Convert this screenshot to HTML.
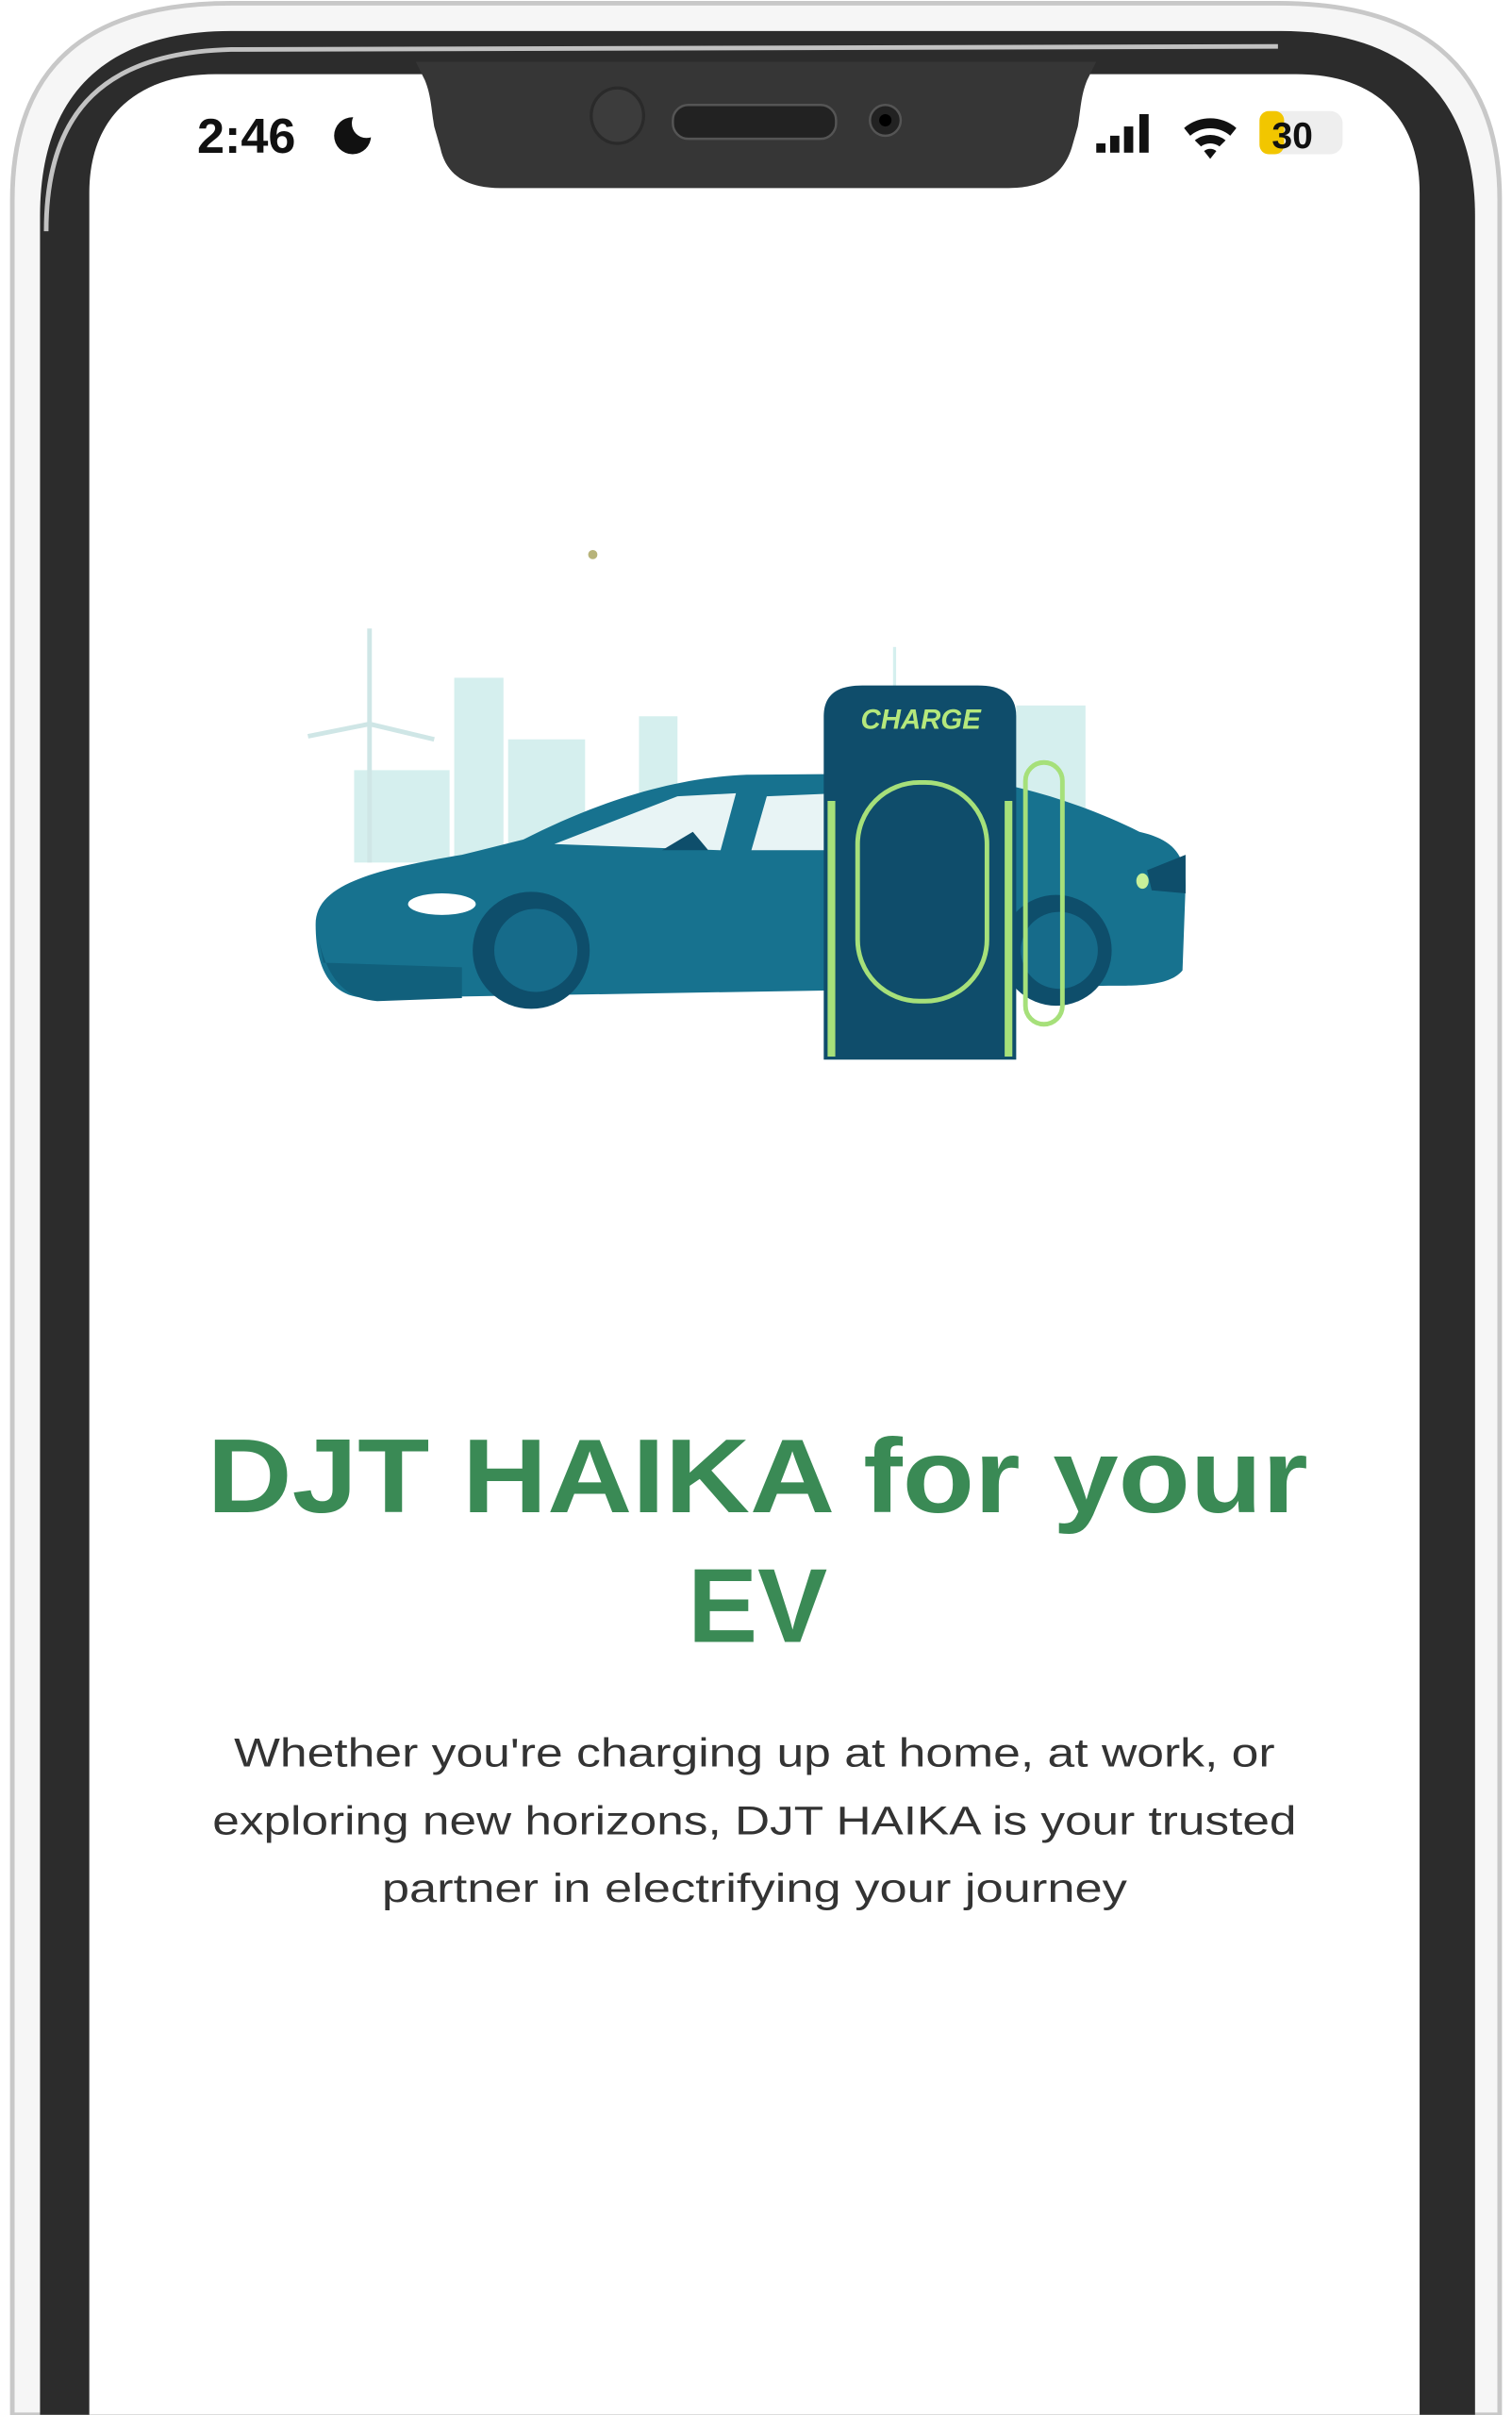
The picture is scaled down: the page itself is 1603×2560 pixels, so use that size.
<!DOCTYPE html>
<html><head><meta charset="utf-8"><style>html,body{margin:0;padding:0;background:#fff}svg{display:block}</style></head>
<body>
<svg width="1603" height="2560" viewBox="0 0 982 1568" xmlns="http://www.w3.org/2000/svg">
<rect width="982" height="1568" fill="#fff"/>
<path d="M8,1568 L8,130 C8,40 60,2 150,2 L830,2 C920,2 974,40 974,130 L974,1568 Z" fill="#f6f6f6" stroke="#c8c8c8" stroke-width="3"/>
<path d="M26,1568 L26,140 C26,60 70,20 150,20 L832,20 C910,20 958,60 958,140 L958,1568 Z" fill="#2c2c2c"/>
<path d="M30,150 C30,70 70,34 150,32 L830,30" fill="none" stroke="#e8e8e8" stroke-width="3" opacity="0.8"/>
<path d="M58,1568 L58,125 C58,75 90,48 140,48 L842,48 C892,48 922,75 922,125 L922,1568 Z" fill="#fff"/>
<path d="M270,40 L712,40 L706,52 C702,62 702,70 700,82 L696,96 C690,115 675,122 655,122 L325,122 C305,122 290,115 286,96 L282,82 C280,70 280,62 276,52 Z" fill="#363636"/>
<ellipse cx="401" cy="75" rx="17" ry="18" fill="#3c3c3c" stroke="#2a2a2a" stroke-width="2"/>
<rect x="437" y="68" width="106" height="22" rx="10" fill="#222" stroke="#555" stroke-width="1.5"/>
<circle cx="575" cy="78" r="10" fill="#222" stroke="#555" stroke-width="1.5"/>
<circle cx="575" cy="78" r="4" fill="#000"/>
<text x="128" y="99" font-family="Liberation Sans, sans-serif" font-size="32" font-weight="bold" fill="#111">2:46</text>
<circle cx="229" cy="88" r="12" fill="#111"/>
<circle cx="238" cy="80" r="9.5" fill="#fff"/>
<rect x="712" y="93" width="6" height="6" fill="#111"/>
<rect x="721" y="88" width="6" height="11" fill="#111"/>
<rect x="730" y="82" width="6" height="17" fill="#111"/>
<rect x="740" y="74" width="6" height="25" fill="#111"/>
<path d="M769,83 A26,26 0 0 1 803,83 L799,88 A20,20 0 0 0 773,88 Z M776,91 A16,16 0 0 1 796,91 L792,95 A10,10 0 0 0 780,95 Z M782,98 A6,6 0 0 1 790,98 L786,103 Z" fill="#111"/>
<rect x="818" y="72" width="54" height="28" rx="8" fill="#eee"/>
<rect x="818" y="72" width="16" height="28" rx="6" fill="#f2c600"/>
<text x="826" y="96" font-family="Liberation Sans, sans-serif" font-size="24" font-weight="bold" fill="#111">30</text>
<circle cx="385" cy="360" r="3" fill="#b7b37a"/>
<g fill="#d5efee">
<rect x="295" y="440" width="32" height="120"/>
<rect x="330" y="480" width="50" height="80"/>
<rect x="415" y="465" width="25" height="95"/>
<rect x="230" y="500" width="62" height="60"/>
<rect x="660" y="458" width="45" height="70"/>
<rect x="580" y="420" width="2" height="30"/>
</g>
<g stroke="#cfe6e6" stroke-width="3" fill="none">
<line x1="240" y1="408" x2="240" y2="560"/>
<line x1="240" y1="470" x2="200" y2="478"/>
<line x1="240" y1="470" x2="282" y2="480"/>
</g>
<path d="M205,600 C205,575 240,565 300,555 L340,545 C385,522 435,505 485,503 L600,502 C650,505 700,520 740,540 C762,545 770,555 770,575 L768,630 C760,640 740,640 720,640 L240,648 C215,648 205,630 205,600 Z" fill="#17728f"/>
<path d="M205,600 C210,630 220,648 245,650 L300,648 L300,628 L210,625 Z" fill="#11607c"/>
<path d="M360,548 L440,517 L478,515 L468,552 Z" fill="#e8f4f5"/>
<path d="M488,552 L498,517 L545,515 L545,552 Z" fill="#e8f4f5"/>
<path d="M430,552 L450,540 L460,552 Z" fill="#0e4e6b"/>
<path d="M560,522 L600,527 L585,545 L570,545 Z" fill="#e8f4f5"/>
<ellipse cx="287" cy="587" rx="22" ry="7" fill="#fff"/>
<circle cx="345" cy="617" r="38" fill="#0e4e6b"/>
<circle cx="348" cy="617" r="27" fill="#166b8a"/>
<circle cx="686" cy="617" r="36" fill="#0e4e6b"/>
<circle cx="688" cy="617" r="25" fill="#166b8a"/>
<path d="M745,565 L770,555 L770,580 L748,578 Z" fill="#0e4e6b"/>
<ellipse cx="742" cy="572" rx="4" ry="5" fill="#c8f09a"/>
<path d="M535,688 L535,465 C535,450 545,445 560,445 L635,445 C650,445 660,450 660,465 L660,688 Z" fill="#0f4d6b"/>
<path d="M540,686 L540,520 M655,686 L655,520" stroke="#a6e07a" stroke-width="5"/>
<text x="598" y="473" text-anchor="middle" font-family="Liberation Sans, sans-serif" font-size="18" font-style="italic" font-weight="bold" fill="#b5e87c">CHARGE</text>
<rect x="557" y="508" width="84" height="142" rx="40" fill="none" stroke="#a6e07a" stroke-width="3"/>
<rect x="666" y="495" width="24" height="170" rx="12" fill="none" stroke="#a6e07a" stroke-width="3"/>
<g font-family="Liberation Sans, sans-serif" text-anchor="middle">
<text x="492" y="982" font-size="68" font-weight="bold" fill="#3a8a55" textLength="715" lengthAdjust="spacingAndGlyphs">DJT HAIKA for your</text>
<text x="492" y="1066" font-size="68" font-weight="bold" fill="#3a8a55">EV</text>
<g font-size="26" fill="#333">
<text x="490" y="1147" textLength="676" lengthAdjust="spacingAndGlyphs">Whether you're charging up at home, at work, or</text>
<text x="490" y="1191" textLength="704" lengthAdjust="spacingAndGlyphs">exploring new horizons, DJT HAIKA is your trusted</text>
<text x="490" y="1235" textLength="484" lengthAdjust="spacingAndGlyphs">partner in electrifying your journey</text>
</g>
</g>
</svg>
</body></html>
